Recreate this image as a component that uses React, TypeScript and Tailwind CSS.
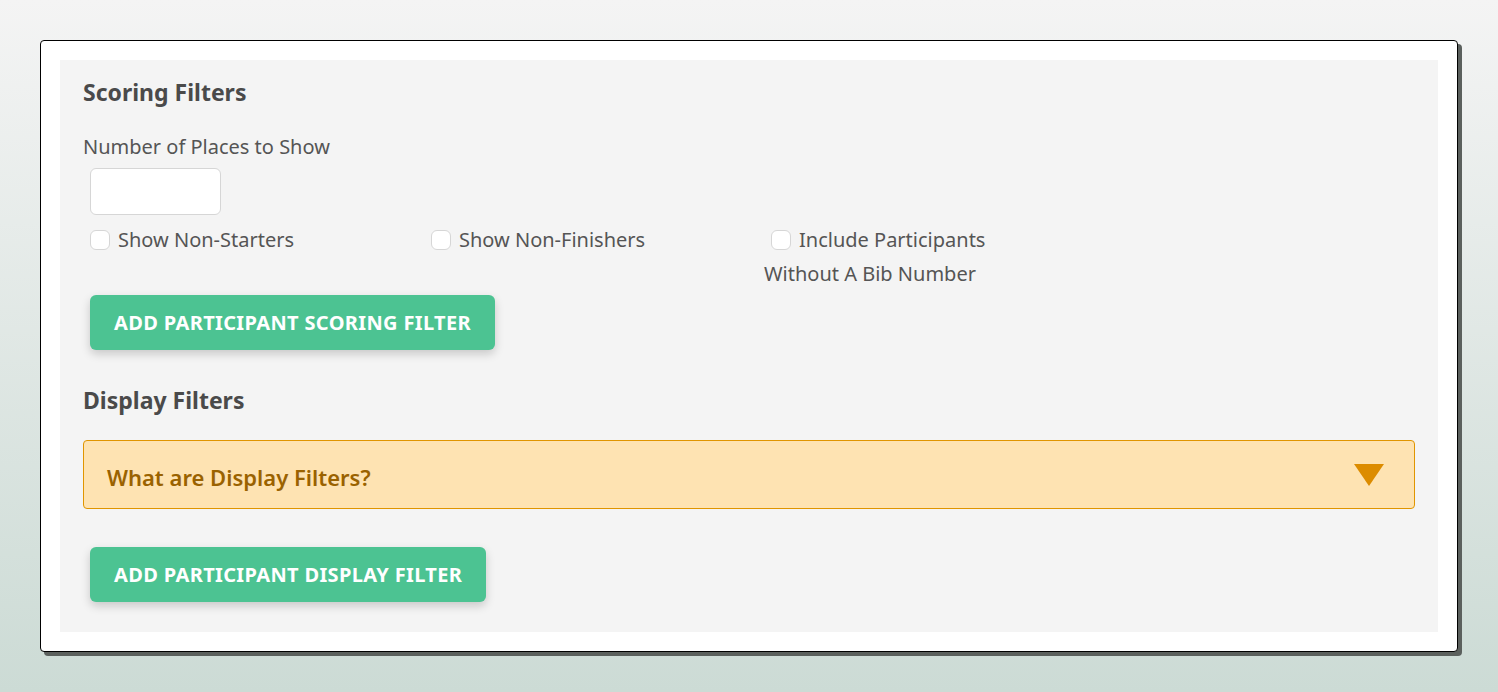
import React from "react";

const checkboxes = [
  { label: "Show Non-Starters", width: "w-[341px]" },
  { label: "Show Non-Finishers", width: "w-[340px]" },
  { label: "Include Participants Without A Bib Number", width: "w-[250px]" },
];

const Checkbox = ({ label, width }: { label: string; width: string }) => (
  <label className={`${width} block text-[20px] leading-[34px] text-[#555]`}>
    <span className="ml-[7px] mr-[8px] inline-block h-[20px] w-[20px] translate-y-[3px] rounded-[6px] border border-[#d6d6d6] bg-white" />
    {label}
  </label>
);

const GreenButton = ({ children }: { children: React.ReactNode }) => (
  <button className="ml-[7px] h-[55px] rounded-[6px] bg-[#4cc392] px-[24px] text-[20px] font-bold uppercase tracking-[0.35px] text-white shadow-[0_4px_10px_rgba(0,0,0,0.18)]">
    {children}
  </button>
);

export default function App() {
  return (
    <div
      className="h-[692px] w-full bg-gradient-to-b from-[#f4f4f4] to-[#ccdbd5] p-[40px]"
      style={{ fontFamily: '"Noto Sans", "Open Sans", sans-serif' }}
    >
      <div className="rounded-[4px] border border-black bg-white p-[19px] shadow-[4px_4px_0_#5b605d]">
        <div className="bg-[#f4f4f4] px-[23px] pb-[30px] pt-[16px]">
          <h2 className="text-[23px] font-bold leading-[32px] text-[#4a4a4a]">Scoring Filters</h2>

          <div className="mt-[24px] text-[20px] leading-[30px] text-[#555]">Number of Places to Show</div>
          <input
            type="text"
            className="ml-[7px] mt-[6px] block h-[47px] w-[131px] rounded-[6px] border border-[#d6d6d6] bg-white"
          />

          <div className="mt-[8px] flex items-start">
            {checkboxes.map((c) => (
              <Checkbox key={c.label} {...c} />
            ))}
          </div>

          <div className="mt-[4px]">
            <GreenButton>Add Participant Scoring Filter</GreenButton>
          </div>

          <h2 className="mt-[34px] text-[23px] font-bold leading-[32px] text-[#4a4a4a]">Display Filters</h2>

          <div className="mt-[24px] flex h-[69px] items-center justify-between rounded-[4px] border border-[#e09500] bg-[#fee3b2] pl-[23px] pr-[30px] pt-[5px]">
            <span className="text-[22px] font-semibold text-[#9a6200]">What are Display Filters?</span>
            <svg width="30" height="22" viewBox="0 0 30 22" className="-mt-[5px]">
              <polygon points="0,0 30,0 15,22" fill="#dc8c00" />
            </svg>
          </div>

          <div className="mt-[38px]">
            <GreenButton>Add Participant Display Filter</GreenButton>
          </div>
        </div>
      </div>
    </div>
  );
}
